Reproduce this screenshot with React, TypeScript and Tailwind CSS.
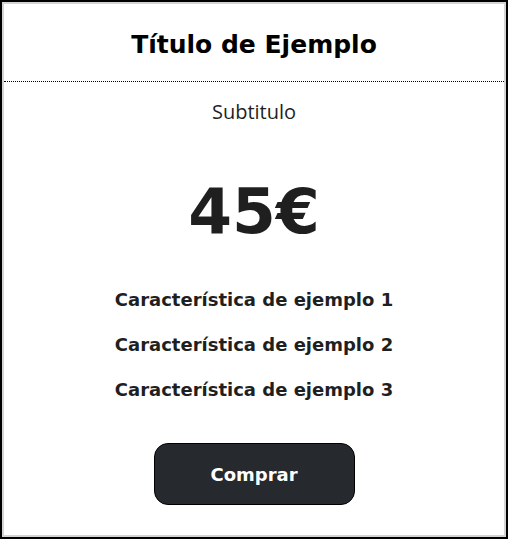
export default function App() {
  return (
    <div className="w-[508px] h-[539px] border-2 border-black bg-white">
      <div className="h-full border-2 border-[#d4d4d4] flex flex-col items-center text-[#1f1f1f] font-['DejaVu_Sans',sans-serif]">
        <h1 className="w-full h-[78px] pt-[4px] flex items-center justify-center border-b border-dotted border-black text-[25px] font-bold text-black">
          Título de Ejemplo
        </h1>
        <p className="mt-[16px] text-[20px] leading-[28px] font-['Open_Sans',sans-serif]">Subtitulo</p>
        <div className="mt-[54px] text-[63px] font-bold leading-none">45€</div>
        <ul className="mt-[45px] flex flex-col gap-[21px] text-[18px] leading-[24px] font-bold">
          <li>Característica de ejemplo 1</li>
          <li>Característica de ejemplo 2</li>
          <li>Característica de ejemplo 3</li>
        </ul>
        <button className="mt-[41px] w-[201px] h-[62px] rounded-[14px] bg-[#262a2e] border border-black text-white text-[18px] font-bold">
          Comprar
        </button>
      </div>
    </div>
  )
}
